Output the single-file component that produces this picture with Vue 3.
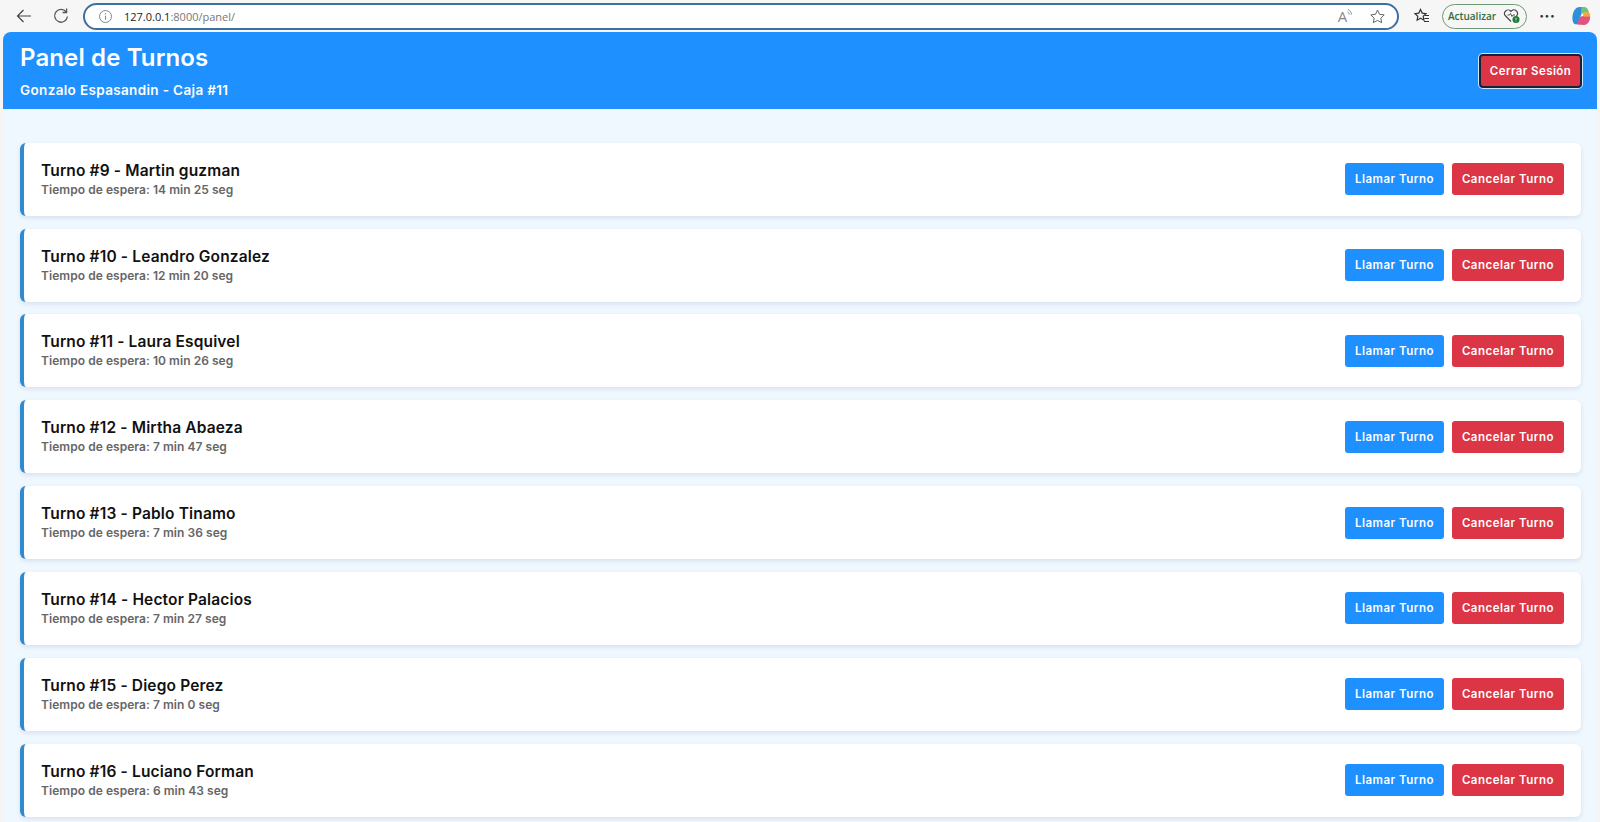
<script setup>
const turnos = [
  { id: 9, nombre: 'Martin guzman', espera: '14 min 25 seg' },
  { id: 10, nombre: 'Leandro Gonzalez', espera: '12 min 20 seg' },
  { id: 11, nombre: 'Laura Esquivel', espera: '10 min 26 seg' },
  { id: 12, nombre: 'Mirtha Abaeza', espera: '7 min 47 seg' },
  { id: 13, nombre: 'Pablo Tinamo', espera: '7 min 36 seg' },
  { id: 14, nombre: 'Hector Palacios', espera: '7 min 27 seg' },
  { id: 15, nombre: 'Diego Perez', espera: '7 min 0 seg' },
  { id: 16, nombre: 'Luciano Forman', espera: '6 min 43 seg' },
]
</script>

<template>
  <div class="window">
    <div class="toolbar">
      <svg class="tb-icon back" width="18" height="18" viewBox="0 0 18 18"><path d="M16 9H2.500M8.500 3 2.500 9l6 6" fill="none" stroke="#444" stroke-width="1.200"/></svg>
      <svg class="tb-icon reload" width="18" height="18" viewBox="0 0 18 18"><path d="M14.200 5A6.400 6.400 0 1 0 15.400 9.500" fill="none" stroke="#555" stroke-width="1.300"/><path d="M14.600 1.500v4h-4" fill="none" stroke="#555" stroke-width="1.300"/></svg>
      <div class="address">
        <svg width="15" height="15" viewBox="0 0 15 15"><circle cx="7.500" cy="7.500" r="6" fill="none" stroke="#888" stroke-width="1"/><path d="M7.500 6.800v4M7.500 4.200v1.200" stroke="#888" stroke-width="1.100"/></svg>
        <span class="url"><span class="host">127.0.0.1</span>:8000/panel/</span>
        <span class="spacer"></span>
        <span class="read">A<svg width="7" height="10" viewBox="0 0 7 10"><path d="M1 1.500c2 .8 3 2.300 3.500 5M.500 4c1 .4 1.500 1.100 1.800 2.500" fill="none" stroke="#888" stroke-width="1"/></svg></span>
        <svg width="17" height="17" viewBox="0 0 17 17"><path d="m8.500 2 2 4.300 4.700.6-3.400 3.200.9 4.600-4.200-2.300-4.200 2.300.9-4.600L1.800 6.900l4.700-.6Z" fill="none" stroke="#666" stroke-width="1"/></svg>
      </div>
      <svg class="fav" width="18" height="18" viewBox="0 0 18 18"><path d="m7.500 2.500 1.700 3.600 3.800.5-2.800 2.700.7 3.900-3.400-1.900-3.400 1.900.7-3.900L2 6.600l3.800-.5Z" fill="none" stroke="#333" stroke-width="1.200"/><path d="M12 8.500h4M11.500 11.500h4.500M11 14.500h5" stroke="#333" stroke-width="1"/></svg>
      <div class="update">
        <span>Actualizar</span>
        <svg width="18" height="16" viewBox="0 0 18 16"><path d="M8 13.500 2.600 8A3.500 3.500 0 0 1 7.600 3L8 3.400 8.400 3a3.500 3.500 0 0 1 5 5" fill="none" stroke="#444" stroke-width="1.100"/><path d="M4.500 7h2l1-1.500 1.500 3 1-1.500h2" fill="none" stroke="#444" stroke-width=".9"/><circle cx="13" cy="11.500" r="3.500" fill="#1c7a34"/><path d="M13 9.800v2M13 12.600v.8" stroke="#fff" stroke-width=".9"/></svg>
      </div>
      <span class="dots">···</span>
      <svg class="copilot" width="20" height="20" viewBox="0 0 20 20">
        <path d="M4 3.500C5 1.800 6.800 1 9 1h3l-2 8-3 8.500c-1 1.200-3.500 1.200-4.500-.5C.8 14 1 7 4 3.500Z" fill="#2f8fd8"/>
        <path d="M10.500 1H13c2.500 0 3.800 1.500 4.500 4l.5 2-5-.5-3 2Z" fill="#6cc47e"/>
        <path d="M6 18.500 9 11l4-1.500 6 .5c.5 3.500-1.500 9-6 9Z" fill="#e2527f"/>
        <path d="M12 6.500 17.800 6c1.200 1.500 1.500 3 1.200 4.500l-6.500.2Z" fill="#efa93f"/>
      </svg>
    </div>

    <div class="page">
      <header class="head">
        <div>
          <h1>Panel de Turnos</h1>
          <p>Gonzalo Espasandin - Caja #11</p>
        </div>
        <button class="logout">Cerrar Sesión</button>
      </header>
      <main class="list">
        <article v-for="t in turnos" :key="t.id" class="card">
          <div class="info">
            <h2>Turno #{{ t.id }} - {{ t.nombre }}</h2>
            <p>Tiempo de espera: {{ t.espera }}</p>
          </div>
          <div class="actions">
            <button class="btn call">Llamar Turno</button>
            <button class="btn cancel">Cancelar Turno</button>
          </div>
        </article>
      </main>
    </div>
  </div>
</template>

<style>
html, body { margin: 0; height: 100%; overflow: hidden; background: #f6f5f5; }
</style>

<style scoped>
.window { width: 1600px; height: 822px; overflow: hidden; display: flex; flex-direction: column; font-family: "Inter", "Open Sans", sans-serif; }
.toolbar { height: 32px; flex: none; display: flex; align-items: center; padding-left: 15px; box-sizing: border-box; background: #f7f6f6; }
.tb-icon.reload { margin-left: 19px; }
.address { margin-left: 13px; width: 1316px; height: 27px; box-sizing: border-box; border: 2px solid #3f6f9f; border-radius: 14px; background: #fff; display: flex; align-items: center; padding: 0 11px 0 13px; color: #777; }
.url { margin-left: 11px; font-family: "Open Sans", sans-serif; font-size: 11px; }
.host { color: #222; }
.spacer { flex: 1; }
.read { width: 20px; display: flex; align-items: flex-start; justify-content: center; font-family: "Open Sans", sans-serif; font-size: 15px; line-height: 18px; color: #888; margin-right: 13px; }
.read svg { margin-top: 1px; }
.fav { margin-left: 14px; }
.update { margin-left: 11px; width: 85px; height: 25px; box-sizing: border-box; border: 1px solid #6d9a72; border-radius: 13px; display: flex; align-items: center; justify-content: center; gap: 7px; font-family: "Open Sans", sans-serif; font-size: 10px; font-weight: 600; color: #2f6d3a; }
.dots { margin-left: 9px; width: 22px; font-size: 16px; font-weight: 700; color: #333; text-align: center; }
.copilot { margin-left: 13px; }

.page { flex: 1; margin: 0 3px; background: #f0f8ff; border-radius: 8px 8px 0 0; overflow: hidden; min-height: 0; }
.head { height: 77px; box-sizing: border-box; background: #1e90ff; color: #fff; display: flex; justify-content: space-between; align-items: center; padding: 0 15px 0 17px; }
h1 { margin: 0; font-size: 24px; line-height: 30px; font-weight: 600; letter-spacing: .13px; }
.head p { margin: 8px 0 0; font-size: 13.500px; line-height: 18px; font-weight: 600; letter-spacing: .35px; }
.logout { width: 103px; height: 34px; box-sizing: border-box; border: 2px solid #16213a; box-shadow: 0 0 0 1px #cfe6ff; border-radius: 4px; background: #dc3545; color: #fff; font: 600 11.500px "Inter", sans-serif; letter-spacing: .4px; padding: 0; }

.list { padding: 33.700px 16px 0 17px; display: flex; flex-direction: column; gap: 12.850px; }
.card { height: 73px; flex: none; box-sizing: border-box; background: #fff; border-left: 4px solid #2f8ad0; border-radius: 6px; box-shadow: 0 2px 5px rgba(30, 60, 110, .12); display: flex; justify-content: space-between; align-items: center; padding: 0 17px 0 17px; }
h2 { margin: 0; font-size: 15.500px; line-height: 20px; font-weight: 600; color: #111; letter-spacing: .15px; }
.info p { margin: 1px 0 0; font-size: 12px; line-height: 16px; font-weight: 600; color: #666; letter-spacing: .05px; }
.actions { display: flex; gap: 8px; }
.btn { height: 32px; border: 0; border-radius: 3px; color: #fff; font: 600 11.500px "Inter", sans-serif; letter-spacing: .5px; padding: 0; }
.call { width: 99px; background: #1e90ff; }
.cancel { width: 112px; background: #dc3545; }
</style>
